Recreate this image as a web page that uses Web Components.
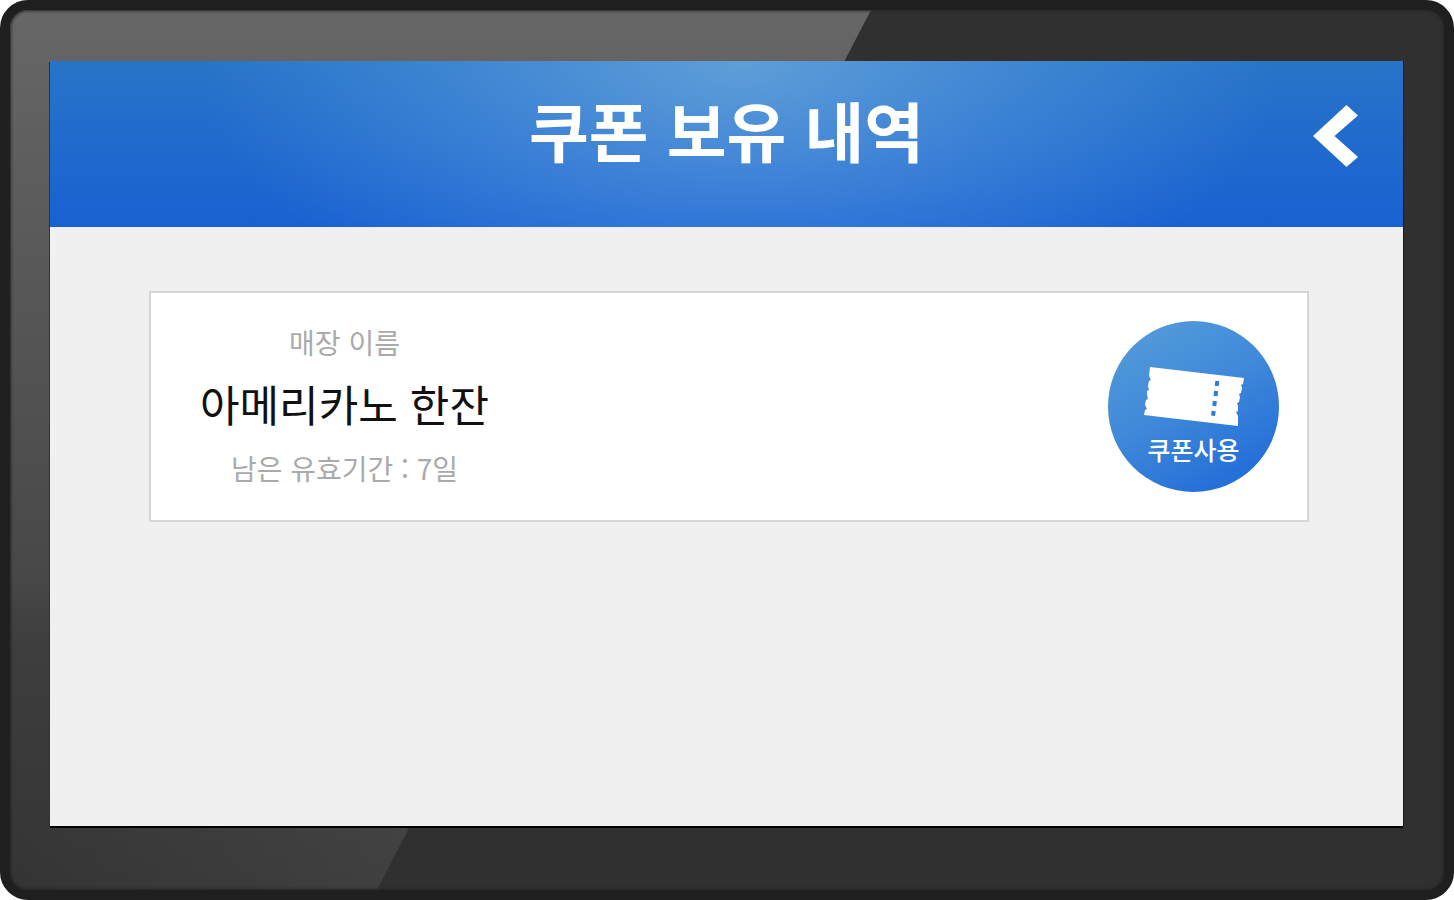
<!DOCTYPE html>
<html lang="ko">
<head>
<meta charset="utf-8">
<meta name="viewport" content="width=device-width, initial-scale=1">
<title>쿠폰 보유 내역</title>
<style>
  body { margin: 0; background: #fff; font-family: "Noto Sans CJK KR", "Noto Sans", sans-serif; }
</style>
</head>
<body>
<kiosk-frame>
  <page-header>쿠폰 보유 내역</page-header>
  <coupon-list>
    <coupon-card>
      <span slot="store">매장 이름</span>
      <span slot="name">아메리카노 한잔</span>
      <span slot="expiry">남은 유효기간 : 7일</span>
      <use-button slot="action">쿠폰사용</use-button>
    </coupon-card>
  </coupon-list>
</kiosk-frame>

<template id="kiosk-frame">
  <style>
    :host { display: flex; box-sizing: border-box; position: relative; min-height: 100vh; padding: 51px 41px 64px 40px;
      border: 10px solid #1f1f1f; border-radius: 28px; background: #303030; overflow: hidden; }
    .glare { position: absolute; inset: 0; width: 100%; height: 100%; }
    .bezel { position: absolute; inset: 0; border-radius: 18px; box-shadow: inset 0 0 3px 1px #262626; }
    main { position: relative; flex: 1; min-width: 0; display: flex; flex-direction: column; background: #f0f0f0;
      box-shadow: 1px 0 0 #1c1b14, 0 2px 0 #000, -1px 1px 0 #33332f; }
  </style>
  <svg class="glare" viewBox="0 0 1434 880" preserveAspectRatio="none" aria-hidden="true">
    <defs>
      <linearGradient id="g" x1="0" y1="0" x2="0" y2="1">
        <stop offset="0" stop-color="#676767"/><stop offset=".15" stop-color="#5f5f5f"/>
        <stop offset=".64" stop-color="#484848"/><stop offset=".72" stop-color="#3e3e3e"/>
        <stop offset="1" stop-color="#343434"/>
      </linearGradient>
      <linearGradient id="h" x1="0" x2="1"><stop offset="0" stop-color="#fff" stop-opacity="0"/><stop offset="1" stop-color="#fff" stop-opacity=".06"/></linearGradient>
    </defs>
    <path d="M0 0H861L835 50L400 816L367 880H0Z" fill="url(#g)"/>
    <path d="M0 816H400L367 880H0Z" fill="url(#h)"/>
  </svg>
  <div class="bezel"></div>
  <main><slot></slot></main>
</template>

<template id="page-header">
  <style>
    :host { display: block; }
    header { display: grid; grid-template-columns: 1fr auto 1fr; align-items: center; height: 166px; box-sizing: border-box; padding: 0 44px 16px;
      background: radial-gradient(ellipse 40% 170% at 51% 0, rgba(128,184,226,.62), rgba(112,172,230,.34) 50%, rgba(100,160,230,0)),
        linear-gradient(#2774c8, #1961d2); }
    h1 { grid-column: 2; margin: 0; padding-bottom: 14px; font-size: 65px; line-height: 96px; font-weight: 700; color: #fff; white-space: nowrap; }
    button { justify-self: end; display: flex; padding: 0; border: 0; background: none; cursor: pointer; }
  </style>
  <header>
    <h1><slot></slot></h1>
    <button type="button" aria-label="뒤로">
      <svg width="48" height="66" viewBox="0 0 48 66" aria-hidden="true"><path d="M35.500 2L47 12.500L23.500 33L47 54L35.500 64L2 33Z" fill="#fff"/></svg>
    </button>
  </header>
</template>

<template id="coupon-list">
  <style>
    :host { display: flex; flex-direction: column; gap: 32px; padding: 64px 94px 64px 99px; }
  </style>
  <slot></slot>
</template>

<template id="coupon-card">
  <style>
    :host { display: block; }
    article { display: flex; justify-content: space-between; align-items: flex-start; padding: 28px 28px 28px 49px;
      border: 2px solid #d6d6d6; background: #fff; }
    .info { display: flex; flex-direction: column; align-items: center; }
    p, h2 { margin: 0; white-space: nowrap; }
    p { font-size: 28px; line-height: 42px; color: #aaa; }
    h2 { padding-bottom: 4px; font-size: 43px; line-height: 80px; font-weight: 400; color: #111; }
  </style>
  <article>
    <div class="info">
      <p><slot name="store"></slot></p>
      <h2><slot name="name"></slot></h2>
      <p><slot name="expiry"></slot></p>
    </div>
    <slot name="action"></slot>
  </article>
</template>

<template id="use-button">
  <style>
    :host { display: block; }
    button { display: flex; flex-direction: column; align-items: center; justify-content: flex-end; gap: 2px; width: 171px; height: 171px;
      box-sizing: border-box; padding: 0 0 24px; border: 0; border-radius: 50%; color: #fff; cursor: pointer;
      font: 500 25px/38px "Noto Sans CJK KR", "Noto Sans", sans-serif;
      background: linear-gradient(150deg, #5199d9 12%, #4189d9 45%, #1f6bd8 92%); }
  </style>
  <button type="button">
    <svg width="102" height="62" viewBox="0 0 102 62" aria-hidden="true">
      <path d="M7 1L101 12L100 18L98 19L99 22L98 27L96 28L97 31L96 36L94 37L95 40L95 45L93 46L95 50L95 60L1 49L2 44L4 43L2 39L3 34L5 33L4 29L4 25L6 24L5 20L6 15L8 14L6 10Z" fill="#fff"/>
      <path d="M73 15L71 53" stroke="#2f79d8" stroke-width="4" stroke-dasharray="5 5" transform="rotate(4 72 34)"/>
    </svg>
    <span><slot></slot></span>
  </button>
</template>

<script>
  class TemplateElement extends HTMLElement {
    constructor() {
      super();
      const template = document.getElementById(this.localName);
      this.attachShadow({ mode: "open" }).append(template.content.cloneNode(true));
    }
  }
  for (const name of ["kiosk-frame", "page-header", "coupon-list", "coupon-card", "use-button"]) {
    customElements.define(name, class extends TemplateElement {});
  }
</script>
</body>
</html>
